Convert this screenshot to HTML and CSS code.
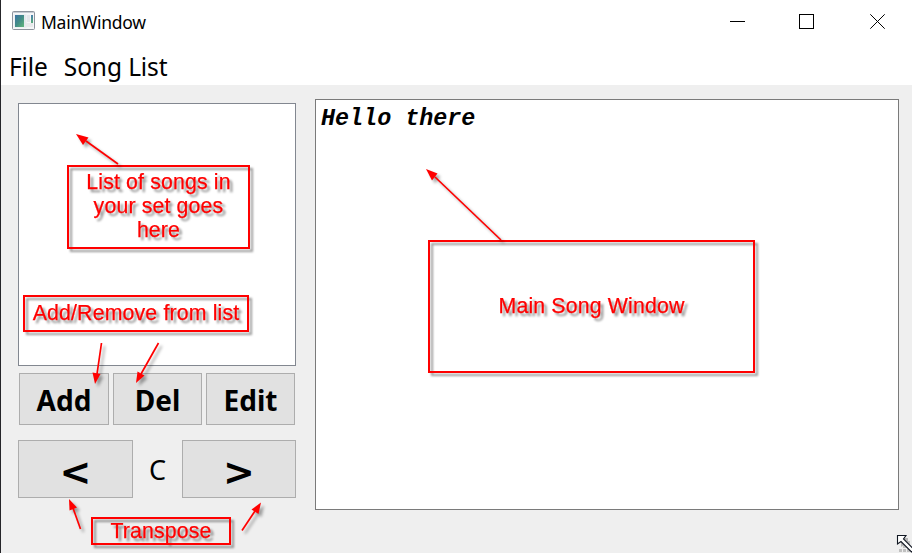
FILE: index.html
```html
<!DOCTYPE html>
<html lang="en">
<head>
<meta charset="utf-8">
<title>MainWindow</title>
<link rel="stylesheet" href="styles.css">
</head>
<body>
<div class="window">
  <header class="titlebar">
    <svg class="app-icon" width="23" height="19" viewBox="0 0 23 19">
      <defs>
        <linearGradient id="pane" x1="0" y1="0" x2="1" y2="1"><stop offset="0" stop-color="#3b73a5"/><stop offset=".5" stop-color="#438c87"/><stop offset="1" stop-color="#62b77c"/></linearGradient>
        <linearGradient id="bar" x1="0" y1="0" x2="0" y2="1"><stop offset="0" stop-color="#477fac"/><stop offset="1" stop-color="#58aa78"/></linearGradient>
      </defs>
      <rect x=".5" y=".5" width="22" height="18" rx="1" fill="#f5f6f8" stroke="#8d939d"/>
      <path d="M1 1.5H22" stroke="#c5cbd3"/>
      <rect x="2.5" y="3.5" width="12" height="13" fill="#e4e9ed"/>
      <rect x="3" y="4" width="9" height="12" fill="url(#pane)"/>
      <rect x="15" y="4" width="3" height="7" fill="#e3e6ea"/>
      <rect x="19" y="4" width="2" height="8" fill="url(#bar)"/>
      <rect x="14" y="12" width="7" height="4" fill="#e7e9eb"/>
    </svg>
    <span class="title">MainWindow</span>
    <svg class="controls" width="156" height="15" viewBox="0 0 156 15" fill="none" stroke="#000">
      <path d="M0 7.5H15"/>
      <rect x="69.5" y=".5" width="14" height="14"/>
      <path d="M140.3 .3L154.7 14.7M154.7 .3L140.3 14.7"/>
    </svg>
  </header>
  <nav class="menubar"><span>File</span><span>Song List</span></nav>
  <main class="content">
    <section class="sidebar">
      <div class="songs"></div>
      <div class="actions">
        <button class="btn"><span>Add</span></button>
        <button class="btn"><span>Del</span></button>
        <button class="btn"><span>Edit</span></button>
      </div>
      <div class="transpose">
        <button class="btn step"><span>&lt;</span></button>
        <span class="key">C</span>
        <button class="btn step"><span>&gt;</span></button>
      </div>
    </section>
    <section class="editor"><span>Hello there</span></section>
  </main>
  <div class="note note-songs"><span>List of songs in</span><span>your set goes</span><span>here</span></div>
  <div class="note note-add"><span>Add/Remove from list</span></div>
  <div class="note note-transpose"><span>Transpose</span></div>
  <div class="note note-main"><span>Main Song Window</span></div>
  <svg class="arrows" width="912" height="553" viewBox="0 0 912 553">
    <g fill="red" stroke="red" stroke-width="1.7">
      <path d="M118 164L86 141"/><path stroke="none" d="M76 134L88.500 137.500L83 145Z"/>
      <path d="M501 240L435 177"/><path stroke="none" d="M426 169L437.500 173.500L432 180.500Z"/>
      <path d="M101.500 343L97 374"/><path stroke="none" d="M95 384L92.500 372.500L100.500 374Z"/>
      <path d="M158.500 343L141 374"/><path stroke="none" d="M136 383L137.500 371.500L144.500 375.500Z"/>
      <path d="M80.500 529L73 508"/><path stroke="none" d="M69 499L77 507.500L69.500 510.500Z"/>
      <path d="M242 530.500L255 511"/><path stroke="none" d="M261 502.500L258.500 514L251.500 509.500Z"/>
    </g>
  </svg>
  <svg class="cursor" width="16" height="19" viewBox="0 0 16 19">
    <path fill="#c0c0c0" d="M3 15h3v3H3zM7 15h3v3H7zM11 15h3v3h-3zM7 11h3v3H7zM11 7h3v3h-3z"/>
    <path fill="#b5b5b5" d="M5 4h7v4l4 5v5L8 11l-3 2z"/>
    <path fill="#fff" stroke="#111722" stroke-width="1.1" d="M1.500 1.500H10L7.500 5L18 15.500L15.500 18L5 7.500L1.500 10Z"/>
  </svg>
</div>
</body>
</html>
```
FILE: styles.css
```css
* { box-sizing: border-box; }
body { margin: 0; overflow: hidden; }
.window {
  position: relative;
  display: flex;
  flex-direction: column;
  width: 912px;
  height: 553px;
  border-left: 1px solid #252529;
  background: #efefef;
  color: #000;
  font-family: "Noto Sans", sans-serif;
  overflow: hidden;
}
.titlebar {
  display: flex;
  align-items: center;
  height: 43px;
  padding: 0 26px 0 11px;
  background: #fff;
}
.app-icon { margin-top: -2px; }
.title { margin: 1px auto 0 6px; font-size: 17.5px; letter-spacing: -0.27px; }
.menubar {
  display: flex;
  gap: 16px;
  height: 42px;
  padding-left: 8px;
  background: #fff;
  font-size: 24.5px;
  letter-spacing: -0.1px;
  line-height: 48px;
  white-space: nowrap;
}
.content { display: flex; gap: 19px; padding: 14px 13px 0 17px; }
.sidebar { width: 278px; padding-top: 4px; }
.songs { height: 263px; border: 1px solid #828790; background: #fff; }
.actions {
  display: grid;
  grid-template-columns: 90px 89px 89px;
  gap: 4px;
  padding: 7px 1px 0;
}
.btn {
  display: flex;
  align-items: center;
  justify-content: center;
  height: 52px;
  padding: 0;
  border: 1px solid #adadad;
  background: #e1e1e1;
  color: #000;
  font: bold 28px "Noto Sans", sans-serif;
}
.btn span { margin-top: 1px; }
.transpose {
  display: grid;
  grid-template-columns: 115px 49px 114px;
  margin-top: 15px;
}
.btn.step { height: 58px; font: bold 38px/50px "DejaVu Sans", sans-serif; }
.step span { margin-top: 5px; }
.key { font-size: 27px; line-height: 60px; text-align: center; }
.editor {
  flex: 1;
  height: 411px;
  padding: 5px;
  border: 1px solid #7a7a7a;
  background: #fff;
  font: italic bold 23.4px/28px "Liberation Mono", monospace;
}
.note {
  position: absolute;
  display: flex;
  flex-direction: column;
  align-items: center;
  justify-content: center;
  padding-bottom: 2px;
  border: 2px solid red;
  color: red;
  font: 21.3px/24px "Liberation Sans", sans-serif;
  letter-spacing: 0.15px;
  -webkit-text-stroke: 0.25px red;
  white-space: nowrap;
  filter: drop-shadow(3px 3px 1.3px rgba(0, 0, 0, .4));
}
.note-songs { left: 66px; top: 165px; width: 183px; height: 84px; }
.note-add { left: 22px; top: 295px; width: 226px; height: 37px; }
.note-transpose { left: 90px; top: 517px; width: 140px; height: 28px; padding-bottom: 0; }
.note-main { left: 427px; top: 240px; width: 327px; height: 133px; }
.arrows {
  position: absolute;
  left: -1px;
  top: 0;
  filter: drop-shadow(3px 3px 1.5px rgba(0, 0, 0, .35));
}
.cursor { position: absolute; right: 0; bottom: 0; }
```
